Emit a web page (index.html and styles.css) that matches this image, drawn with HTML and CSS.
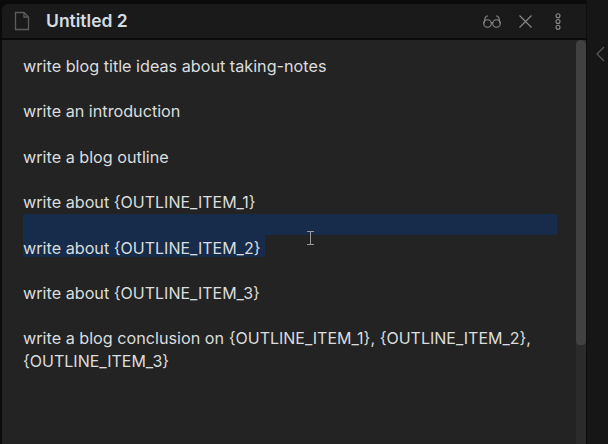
FILE: index.html
```html
<!DOCTYPE html>
<html lang="en">

<head>
  <meta charset="UTF-8">
  <title>Untitled 2</title>
  <link rel="stylesheet" href="styles.css">
</head>

<body>
  <div class="window">
    <div class="pane">
      <div class="header">
        <svg class="file-icon" width="16" height="20" viewBox="0 0 16 20" fill="none" stroke="#5c5c5c" stroke-width="1.3">
          <path d="M1.5 1.5H10L14.5 6V18.5H1.5Z" />
          <path d="M10 1.5V6H14.5" />
        </svg>
        <span class="title">Untitled 2</span>
        <div class="actions">
          <svg width="18" height="13" viewBox="0 0 18 13" fill="none" stroke="#8a8a8a" stroke-width="1.1">
            <circle cx="4.5" cy="8.5" r="3.8" />
            <circle cx="13.5" cy="8.5" r="3.8" />
            <path d="M8 8C8.5 7.5 9.5 7.5 10 8" />
            <path d="M.7 8.5L2.2 2.8C2.5 1.4 3.5 .9 5 1" />
            <path d="M17.3 8.5L15.8 2.8C15.5 1.4 14.5 .9 13 1" />
          </svg>
          <svg width="13" height="13" viewBox="0 0 13 13" fill="none" stroke="#8a8a8a" stroke-width="1.1">
            <path d="M.5 .5L12.5 12.5M12.5 .5L.5 12.5" />
          </svg>
          <svg class="more" width="6" height="17" viewBox="0 0 6 17" fill="none" stroke="#8a8a8a" stroke-width="1.1">
            <circle cx="3" cy="2.7" r="2" />
            <circle cx="3" cy="8.5" r="2" />
            <circle cx="3" cy="14.3" r="2" />
          </svg>
        </div>
      </div>
      <div class="body">
        <div class="editor">
          <p>write blog title ideas about taking-notes</p>
          <p>write an introduction</p>
          <p>write a blog outline</p>
          <p>write about <span class="var">{OUTLINE_ITEM_1}</span></p>
          <div class="selected">
            <div class="sel-blank"></div>
            <span class="sel-text">write about <span class="var">{OUTLINE_ITEM_2}</span></span>
            <svg class="cursor" width="9" height="14" viewBox="0 0 9 14" fill="none" stroke="#9a9a9a" stroke-width="1">
              <path d="M1 .5H8M4.5 .5V13.5M1 13.5H8" />
            </svg>
          </div>
          <p>write about <span class="var">{OUTLINE_ITEM_3}</span></p>
          <p>write a blog conclusion on <span class="var">{OUTLINE_ITEM_1}</span>, <span class="var">{OUTLINE_ITEM_2}</span>, <span class="var">{OUTLINE_ITEM_3}</span></p>
        </div>
        <div class="scrollbar">
          <div class="thumb"></div>
        </div>
      </div>
    </div>
    <div class="side">
      <svg width="9" height="16" viewBox="0 0 9 16" fill="none" stroke="#5a5a5a" stroke-width="1.2">
        <path d="M8 1L1 8L8 15" />
      </svg>
    </div>
  </div>
</body>

</html>
```

FILE: styles.css
```css
html,
body {
  height: 100%;
}

body {
  margin: 0;
  background-color: #0b0b0b;
  color: #dcddde;
  font-family: Inter, "Noto Sans", sans-serif;
  font-size: 16.2px;
  overflow: hidden;
}

.window {
  display: flex;
  height: 444px;
}

.pane {
  flex: 1;
  display: flex;
  flex-direction: column;
  padding: 4px 0 0 2px;
  border-right: 1px solid #0d0d0d;
}

.header {
  display: flex;
  align-items: center;
  height: 34px;
  padding: 0 25px 0 12px;
  background-color: #1a1a1a;
  border-bottom: 2px solid #0b0b0b;
  border-top-left-radius: 6px;
}

.file-icon {
  margin-right: 16px;
}

.title {
  margin-bottom: 2px;
  font-size: 17.5px;
  font-weight: 600;
  color: #d4dce2;
}

.actions {
  margin-left: auto;
  display: flex;
  align-items: center;
  gap: 18px;
}

.more {
  margin-left: 5px;
}

.body {
  flex: 1;
  display: flex;
  background-color: #232323;
}

.editor {
  flex: 1;
  padding: 15px 19px 0 21px;
  line-height: 22.7px;
}

.editor p {
  margin: 0 0 22.7px;
}

.var {
  font-size: 16px;
}

.selected {
  position: relative;
  margin-bottom: 22.7px;
  padding-bottom: 2px;
}

.sel-blank {
  height: 21px;
  margin-top: -23px;
  background-color: #162c4a;
}

.sel-text {
  display: block;
  width: fit-content;
  height: 22.7px;
  padding-right: 4px;
  line-height: 26.7px;
  background-color: #162c4a;
}

.cursor {
  position: absolute;
  left: 283px;
  top: 17px;
}

.scrollbar {
  width: 10px;
  background-color: #2b2b2b;
}

.thumb {
  height: 305px;
  background-color: #414141;
  border-radius: 5px 5px 4px 4px;
}

.side {
  width: 21px;
  background-color: #161616;
  display: flex;
  justify-content: flex-end;
  align-items: flex-start;
  padding: 46px 3px 0 0;
  box-sizing: border-box;
}
```
